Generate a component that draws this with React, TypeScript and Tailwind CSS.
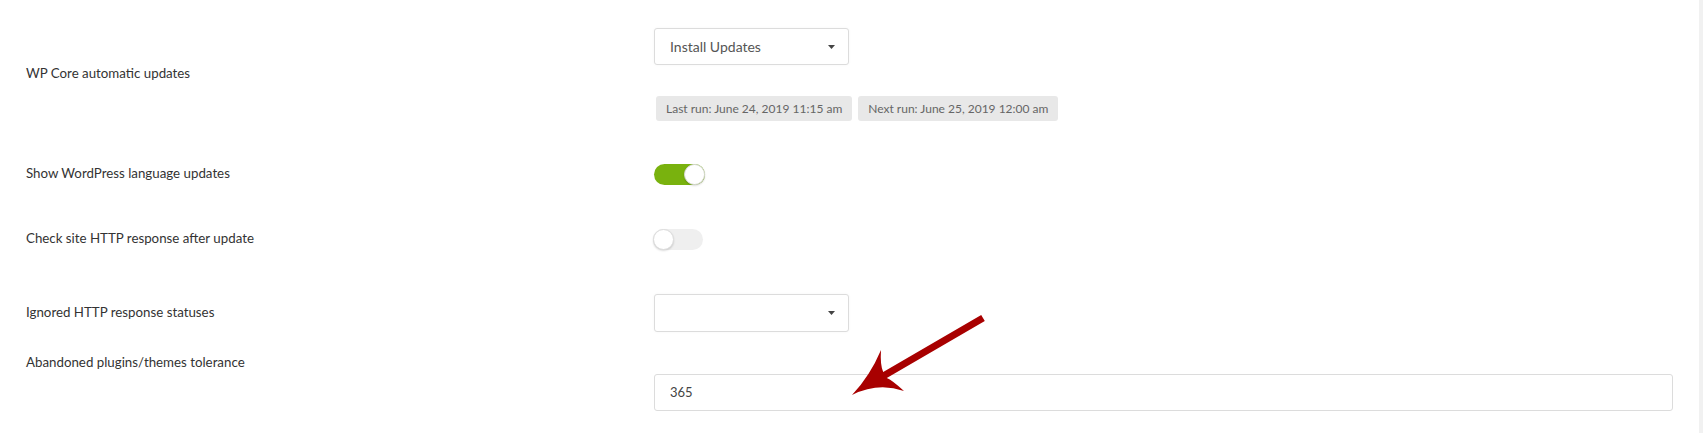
import React from "react";

const font = { fontFamily: "Lato, 'Open Sans', sans-serif" };

function Caret() {
  return (
    <svg width="7" height="4" viewBox="0 0 7 4" className="text-[#444]">
      <path d="M0 0 L7 0 L3.5 4 Z" fill="currentColor" />
    </svg>
  );
}

function SelectBox({ value }: { value?: string }) {
  return (
    <div className="flex w-[195px] items-center justify-between rounded-[3px] border border-[#dcdcdc] bg-white pl-[15px] pr-[13px] shadow-[0_0_3px_rgba(0,0,0,0.04)]">
      <span className="text-[14px] text-[#555]">{value ?? "\u00a0"}</span>
      <Caret />
    </div>
  );
}

function Badge({ children }: { children: React.ReactNode }) {
  return (
    <span className="flex h-[25px] items-center rounded-[3px] bg-[#e8e8e8] px-[10px] text-[12px] text-[#666]">
      {children}
    </span>
  );
}

function Toggle({ on }: { on: boolean }) {
  return (
    <div
      className={
        on
          ? "flex h-[21px] w-[51px] items-center justify-end rounded-full bg-[#79b20e]"
          : "flex h-[21px] w-[50px] items-center justify-start rounded-full bg-[#efefef]"
      }
    >
      <div className="size-[21px] rounded-full border border-[#dcdcdc] bg-white shadow-[0_1px_2px_rgba(0,0,0,0.15)]" />
    </div>
  );
}

function Label({ children }: { children: React.ReactNode }) {
  return (
    <div className="-mt-[3px] w-[628px] shrink-0 text-[13.3px] leading-5 text-[#333]">{children}</div>
  );
}

function Arrow() {
  return (
    <svg
      width="160"
      height="100"
      viewBox="0 0 160 100"
      className="pointer-events-none absolute left-[840px] top-[310px]"
    >
      <path
        d="M141.2 5 L144.8 11 L46.8 68 Q52 70 64 81 Q38 72 12 85 Q30 66 41 40 Q40 55 43.2 62 Z"
        fill="#a80000"
      />
    </svg>
  );
}

export default function App() {
  return (
    <div className="relative flex h-[433px] w-full overflow-hidden bg-white" style={font}>
      <div className="flex flex-1 flex-col pl-[26px]">
        {/* WP core */}
        <div className="flex items-center pt-[28px]">
          <Label>WP Core automatic updates</Label>
          <div className="flex flex-col">
            <div className="flex h-[37px]">
              <SelectBox value="Install Updates" />
            </div>
            <div className="mt-[31px] flex gap-[6px] pl-[2px]">
              <Badge>Last run: June 24, 2019 11:15 am</Badge>
              <Badge>Next run: June 25, 2019 12:00 am</Badge>
            </div>
          </div>
        </div>

        <div className="mt-[43px] flex items-center">
          <Label>Show WordPress language updates</Label>
          <Toggle on />
        </div>

        <div className="mt-[44px] flex items-center">
          <Label>Check site HTTP response after update</Label>
          <div className="-ml-px">
            <Toggle on={false} />
          </div>
        </div>

        <div className="mt-[44px] flex items-center">
          <Label>Ignored HTTP response statuses</Label>
          <div className="flex h-[38px]">
            <SelectBox />
          </div>
        </div>

        <div className="mt-[23px] flex items-start">
          <Label>Abandoned plugins/themes tolerance</Label>
          <div className="mr-[26px] mt-[19px] flex h-[37px] flex-1 items-center rounded-[3px] border border-[#dcdcdc] bg-white pl-[15px] text-[13px] text-[#444]">
            365
          </div>
        </div>
      </div>
      <div className="w-[4px] shrink-0 bg-[#f1f1f1]" />
      <Arrow />
    </div>
  );
}
